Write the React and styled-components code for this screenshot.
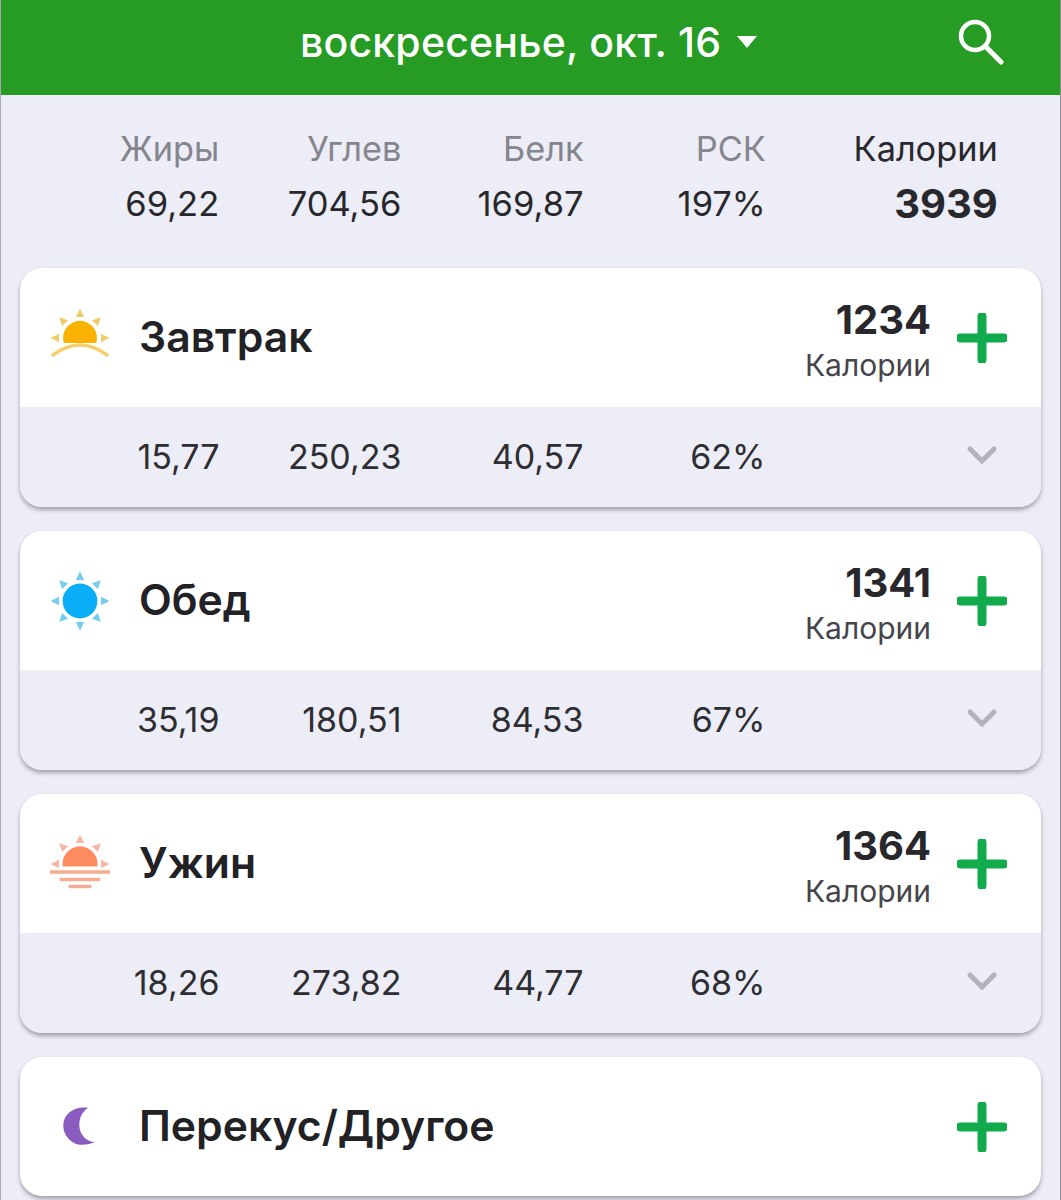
import React from 'react';
import styled, { createGlobalStyle } from 'styled-components';

const GlobalStyle = createGlobalStyle`
  html, body {
    margin: 0;
    padding: 0;
    background: #ecedf6;
  }
  body {
    font-family: Inter, "Noto Sans", "Liberation Sans", sans-serif;
    color: #222226;
  }
`;

const Page = styled.div`
  width: 1061px;
  height: 1200px;
  overflow: hidden;
  box-sizing: border-box;
  background: #ecedf6;
  border-left: 1px solid #a9a9b4;
  border-right: 1px solid #8d8d98;
`;

const Header = styled.header`
  height: 95px;
  background: #279c25;
  display: flex;
  align-items: center;
  justify-content: space-between;
  padding: 0 56px 12px 299px;
  box-sizing: border-box;
`;

const DateButton = styled.div`
  display: flex;
  align-items: center;
  gap: 16px;
  color: #fff;
  font-size: 41px;
  font-weight: 500;
  letter-spacing: 0.2px;
`;

const Summary = styled.section`
  height: 173px;
  box-sizing: border-box;
  padding: 26px 0 0 36px;
  display: grid;
  grid-template-columns: repeat(4, 182.2px) 232px;
  grid-auto-rows: 55px;
  align-items: center;
  font-size: 34.3px;
  text-align: right;
`;

const Label = styled.div`
  color: ${(p) => (p.$dark ? '#27272c' : '#85858d')};
`;

const Total = styled.div`
  color: #27272c;
  font-size: ${(p) => (p.$big ? '40px' : '34.5px')};
  font-weight: ${(p) => (p.$big ? 700 : 400)};
`;

const Cards = styled.div`
  display: flex;
  flex-direction: column;
  gap: 24px;
  padding: 0 19px;
`;

const Card = styled.article`
  border-radius: 22px;
  overflow: hidden;
  background: #fff;
  box-shadow: 0 3px 4px rgba(70, 70, 90, 0.45);
`;

const MealRow = styled.div`
  height: 139px;
  display: flex;
  align-items: center;
  box-sizing: border-box;
  padding-left: 30px;
  padding-right: 34px;
`;

const MealIcon = styled.svg`
  width: 60px;
  height: 60px;
  flex: none;
`;

const MealName = styled.h2`
  flex: 1;
  margin: -2px 0 0 29px;
  font-size: 42.7px;
  font-weight: 600;
  color: #222226;
`;

const MealTotal = styled.div`
  text-align: right;
  margin-right: 26px;
  padding-top: 8px;
`;

const MealCalories = styled.div`
  font-size: 40px;
  font-weight: 700;
  line-height: 46px;
  color: #27272c;
`;

const MealCaption = styled.div`
  font-size: 30px;
  line-height: 44px;
  color: #45454b;
`;

const Macros = styled.div`
  height: 100px;
  background: #ecedf6;
  display: grid;
  grid-template-columns: repeat(4, 182px) 1fr;
  align-items: center;
  padding: 0 43px 2px 17.5px;
  box-sizing: border-box;
  font-size: 34px;
  color: #2d2d32;
  text-align: right;
`;

const Chevron = styled.svg`
  width: 32px;
  height: 22px;
  justify-self: end;
`;

const PlusIcon = () => (
  <svg width="50" height="50" viewBox="0 0 50 50" style={{ flex: 'none' }}>
    <path d="M25 3v44M3 25h44" stroke="#11ab4e" strokeWidth="9" strokeLinecap="round" fill="none" />
  </svg>
);

const rays = (color, angles, cx, cy) =>
  angles.map((a) => (
    <polygon
      key={a}
      fill={color}
      points={`${cx},${cy - 29.5} ${cx - 4.2},${cy - 21} ${cx + 4.2},${cy - 21}`}
      transform={`rotate(${a} ${cx} ${cy})`}
    />
  ));

const SunriseIcon = () => (
  <MealIcon viewBox="0 0 60 60">
    {rays('#f1cd6a', [-90, -45, 0, 45, 90], 30, 30)}
    <path d="M13.8 35a17 17 0 1 1 32.4 0z" fill="#fbb204" />
    <path d="M3 47Q30 27 57 47" stroke="#f6cf6a" strokeWidth="3.6" strokeLinecap="round" fill="none" />
  </MealIcon>
);

const NoonIcon = () => (
  <MealIcon viewBox="0 0 60 60">
    {rays('#72cdee', [0, 45, 90, 135, 180, 225, 270, 315], 30, 30)}
    <circle cx="30" cy="30" r="17.4" fill="#0aaef6" />
  </MealIcon>
);

const SunsetIcon = () => (
  <MealIcon viewBox="0 0 60 60">
    {rays('#f4b9a3', [-90, -45, 0, 45, 90], 30, 30)}
    <path d="M12.7 32.5a17.5 17.5 0 1 1 34.6 0z" fill="#fe8c60" />
    <path d="M1 38h58M11 45.5h38M20 52.5h20" stroke="#f6ac90" strokeWidth="3.3" strokeLinecap="round" fill="none" />
  </MealIcon>
);

const MoonIcon = () => (
  <MealIcon viewBox="0 0 60 60">
    <path
      d="M38.3 10.8C24 9 13.3 17 13.3 28.5 13.3 40 23 48 32 47.8c5 0 10-1.3 13-2.8-9 0-15.7-8-15.7-17 0-8 3.7-14 9-17.2z"
      fill="#8a5cc0"
    />
  </MealIcon>
);

const meals = [
  { name: 'Завтрак', Icon: SunriseIcon, calories: 1234, macros: ['15,77', '250,23', '40,57', '62%'] },
  { name: 'Обед', Icon: NoonIcon, calories: 1341, macros: ['35,19', '180,51', '84,53', '67%'] },
  { name: 'Ужин', Icon: SunsetIcon, calories: 1364, macros: ['18,26', '273,82', '44,77', '68%'] },
  { name: 'Перекус/Другое', Icon: MoonIcon },
];

const summary = [
  ['Жиры', '69,22'],
  ['Углев', '704,56'],
  ['Белк', '169,87'],
  ['РСК', '197%'],
];

const App = () => (
  <Page>
    <GlobalStyle />
    <Header>
      <DateButton>
        воскресенье, окт. 16
        <svg width="20" height="12" viewBox="0 0 20 12">
          <path d="M0 0h20L10 12z" fill="#fff" />
        </svg>
      </DateButton>
      <svg width="46" height="46" viewBox="0 0 46 46">
        <circle cx="17" cy="17" r="14" stroke="#fff" strokeWidth="4.5" fill="none" />
        <path d="M27 27l16 16" stroke="#fff" strokeWidth="5" strokeLinecap="round" />
      </svg>
    </Header>
    <Summary>
      {summary.map(([label]) => (
        <Label key={label}>{label}</Label>
      ))}
      <Label $dark>Калории</Label>
      {summary.map(([label, value]) => (
        <Total key={label}>{value}</Total>
      ))}
      <Total $big>3939</Total>
    </Summary>
    <Cards>
      {meals.map(({ name, Icon, calories, macros }) => (
        <Card key={name}>
          <MealRow>
            <Icon />
            <MealName>{name}</MealName>
            {calories && (
              <MealTotal>
                <MealCalories>{calories}</MealCalories>
                <MealCaption>Калории</MealCaption>
              </MealTotal>
            )}
            <PlusIcon />
          </MealRow>
          {macros && (
            <Macros>
              {macros.map((value) => (
                <div key={value}>{value}</div>
              ))}
              <Chevron viewBox="0 0 32 22">
                <path d="M4 4l12 12L28 4" stroke="#b3b3bc" strokeWidth="5" strokeLinecap="round" fill="none" />
              </Chevron>
            </Macros>
          )}
        </Card>
      ))}
    </Cards>
  </Page>
);

export default App;
